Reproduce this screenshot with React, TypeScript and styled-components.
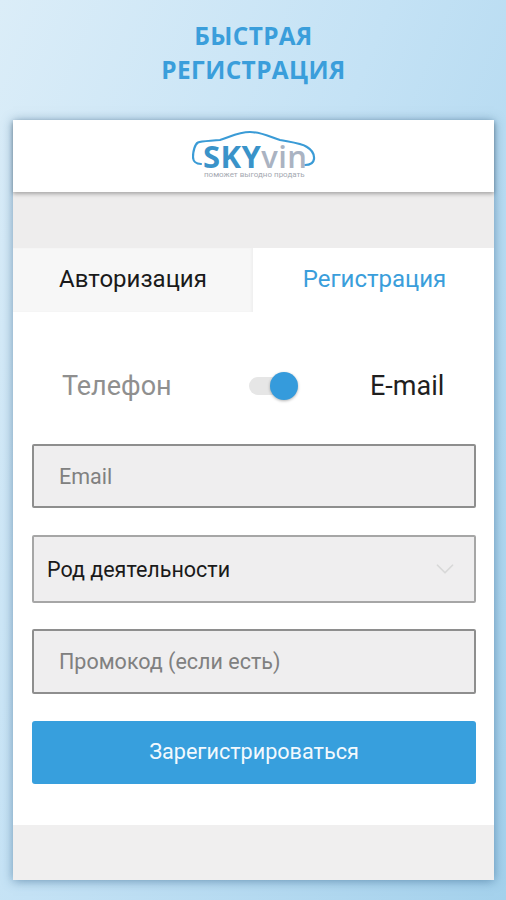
import React from "react";
import styled, { createGlobalStyle } from "styled-components";
import { ChevronDown } from "lucide-react";

const GlobalStyle = createGlobalStyle`
  html, body {
    margin: 0;
    padding: 0;
  }
  * {
    box-sizing: border-box;
  }
`;

const Page = styled.div`
  width: 506px;
  height: 900px;
  overflow: hidden;
  display: flex;
  flex-direction: column;
  align-items: center;
  padding: 19px 12px 0 13px;
  background: linear-gradient(112deg, #dbedf8 0%, #c4e2f5 45%, #a4d1ec 100%);
  font-family: Roboto, "Noto Sans", sans-serif;
`;

const Title = styled.h1`
  margin: 0;
  height: 101px;
  font-family: "Open Sans", "Noto Sans", sans-serif;
  font-size: 24.4px;
  font-weight: 700;
  line-height: 34px;
  letter-spacing: 0.4px;
  text-align: center;
  color: #3a9edb;
`;

const Card = styled.div`
  width: 481px;
  height: 760px;
  display: flex;
  flex-direction: column;
  background: #fff;
  box-shadow: 0 1px 10px rgba(40, 90, 130, 0.55);
`;

const Header = styled.div`
  position: relative;
  z-index: 1;
  height: 72px;
  flex: none;
  display: flex;
  justify-content: center;
  padding-top: 9px;
  padding-left: 1px;
  background: #fff;
  box-shadow: 0 2px 4px rgba(0, 0, 0, 0.3);
`;

const Logo = styled.div`
  position: relative;
  width: 124px;
  height: 50px;
`;

const LogoCar = styled.svg`
  position: absolute;
  top: 0;
  left: 0;
`;

const LogoName = styled.div`
  position: absolute;
  top: 13px;
  left: 11px;
  font-family: "Open Sans", sans-serif;
  font-size: 31px;
  line-height: 28px;
  letter-spacing: 0.4px;
  font-weight: 700;
  color: #3a93c9;
`;

const LogoVin = styled.span`
  font-weight: 600;
  color: #aab3c2;
`;

const LogoTagline = styled.div`
  position: absolute;
  top: 42px;
  left: 12px;
  width: 104px;
  white-space: nowrap;
  font-size: 8px;
  line-height: 8px;
  color: #a4a9b1;
`;

const Band = styled.div`
  height: 56px;
  flex: none;
  background: #eeeded;
`;

const Tabs = styled.div`
  height: 64px;
  flex: none;
  display: flex;
`;

const Tab = styled.div<{ $active?: boolean }>`
  flex: none;
  width: ${(p) => (p.$active ? 241 : 240)}px;
  display: flex;
  align-items: center;
  justify-content: center;
  font-size: 24px;
  background: ${(p) => (p.$active ? "#fff" : "#f7f7f7")};
  color: ${(p) => (p.$active ? "#3a9edb" : "#1a1a1a")};
  padding-bottom: 2px;
  padding-left: ${(p) => (p.$active ? 2 : 0)}px;
  box-shadow: ${(p) => (p.$active ? "none" : "inset -2px 0 2px #f0f0f0")};
`;

const ToggleRow = styled.div`
  height: 132px;
  flex: none;
  display: flex;
  align-items: center;
  padding: 16px 0 0 49px;
`;

const ToggleLabel = styled.div<{ $on?: boolean }>`
  font-size: 27px;
  color: ${(p) => (p.$on ? "#1f1f1f" : "#8f8f8f")};
`;

const ToggleLabelLeft = styled(ToggleLabel)`
  width: 187px;
`;

const ToggleLabelRight = styled(ToggleLabel)`
  margin-left: 77px;
`;

const Switch = styled.div`
  position: relative;
  flex: none;
  width: 44px;
  height: 18px;
  border-radius: 9px;
  background: #e6e6e6;
`;

const Knob = styled.div`
  position: absolute;
  top: -5px;
  right: -5px;
  width: 28px;
  height: 28px;
  border-radius: 50%;
  background: #359bdc;
  box-shadow: 0 1px 3px rgba(0, 0, 0, 0.3);
`;

const Form = styled.div`
  display: flex;
  flex-direction: column;
  padding: 0 18px 0 19px;
`;

const Field = styled.div<{ $h: number; $gap: number; $dark?: boolean }>`
  height: ${(p) => p.$h}px;
  margin-bottom: ${(p) => p.$gap}px;
  display: flex;
  align-items: center;
  justify-content: space-between;
  padding-left: 25px;
  border: 2px solid ${(p) => (p.$dark ? "#8e8e8e" : "#a6a6a6")};
  border-radius: 2px;
  background: #efeeef;
  font-size: 21.5px;
  color: #808080;
`;

const SelectField = styled(Field)`
  padding-left: 13px;
  padding-right: 14px;
  color: #1a1a1a;
`;

const SubmitButton = styled.button`
  height: 63px;
  border: none;
  border-radius: 3px;
  background: #379fdd;
  color: #f2f9fd;
  font-family: inherit;
  font-size: 21.6px;
  padding: 0 0 2px;
`;

const Footer = styled.div`
  margin-top: auto;
  height: 55px;
  background: #f0efef;
`;

const App = () => {
  return (
    <Page>
      <GlobalStyle />
      <Title>
        БЫСТРАЯ
        <br />
        РЕГИСТРАЦИЯ
      </Title>
      <Card>
        <Header>
          <Logo>
            <LogoCar width="124" height="40" viewBox="0 0 124 40" fill="none">
              <path
                d="M9 35 C4 35 1 32 1 28 C1 22 3 15 6 13.500 C9 12 18 12 28 11 C38 8 46 3 58 3 C70 3 78 8 88 11 C98 13 109 14 115 18 C120 21 122.500 25 122 30 C121.500 34 118 36 113 36"
                stroke="#3a9bd6"
                strokeWidth="2.2"
                strokeLinecap="round"
                strokeLinejoin="round"
              />
            </LogoCar>
            <LogoName>
              SKY<LogoVin>vin</LogoVin>
            </LogoName>
            <LogoTagline>поможет выгодно продать</LogoTagline>
          </Logo>
        </Header>
        <Band />
        <Tabs>
          <Tab>Авторизация</Tab>
          <Tab $active>Регистрация</Tab>
        </Tabs>
        <ToggleRow>
          <ToggleLabelLeft>Телефон</ToggleLabelLeft>
          <Switch>
            <Knob />
          </Switch>
          <ToggleLabelRight $on>E-mail</ToggleLabelRight>
        </ToggleRow>
        <Form>
          <Field $h={64} $gap={27} $dark>
            Email
          </Field>
          <SelectField $h={68} $gap={26}>
            Род деятельности
            <ChevronDown size={30} color="#d8d8d8" strokeWidth={1.4} />
          </SelectField>
          <Field $h={65} $gap={27} $dark>
            Промокод (если есть)
          </Field>
          <SubmitButton>Зарегистрироваться</SubmitButton>
        </Form>
        <Footer />
      </Card>
    </Page>
  );
};

export default App;
